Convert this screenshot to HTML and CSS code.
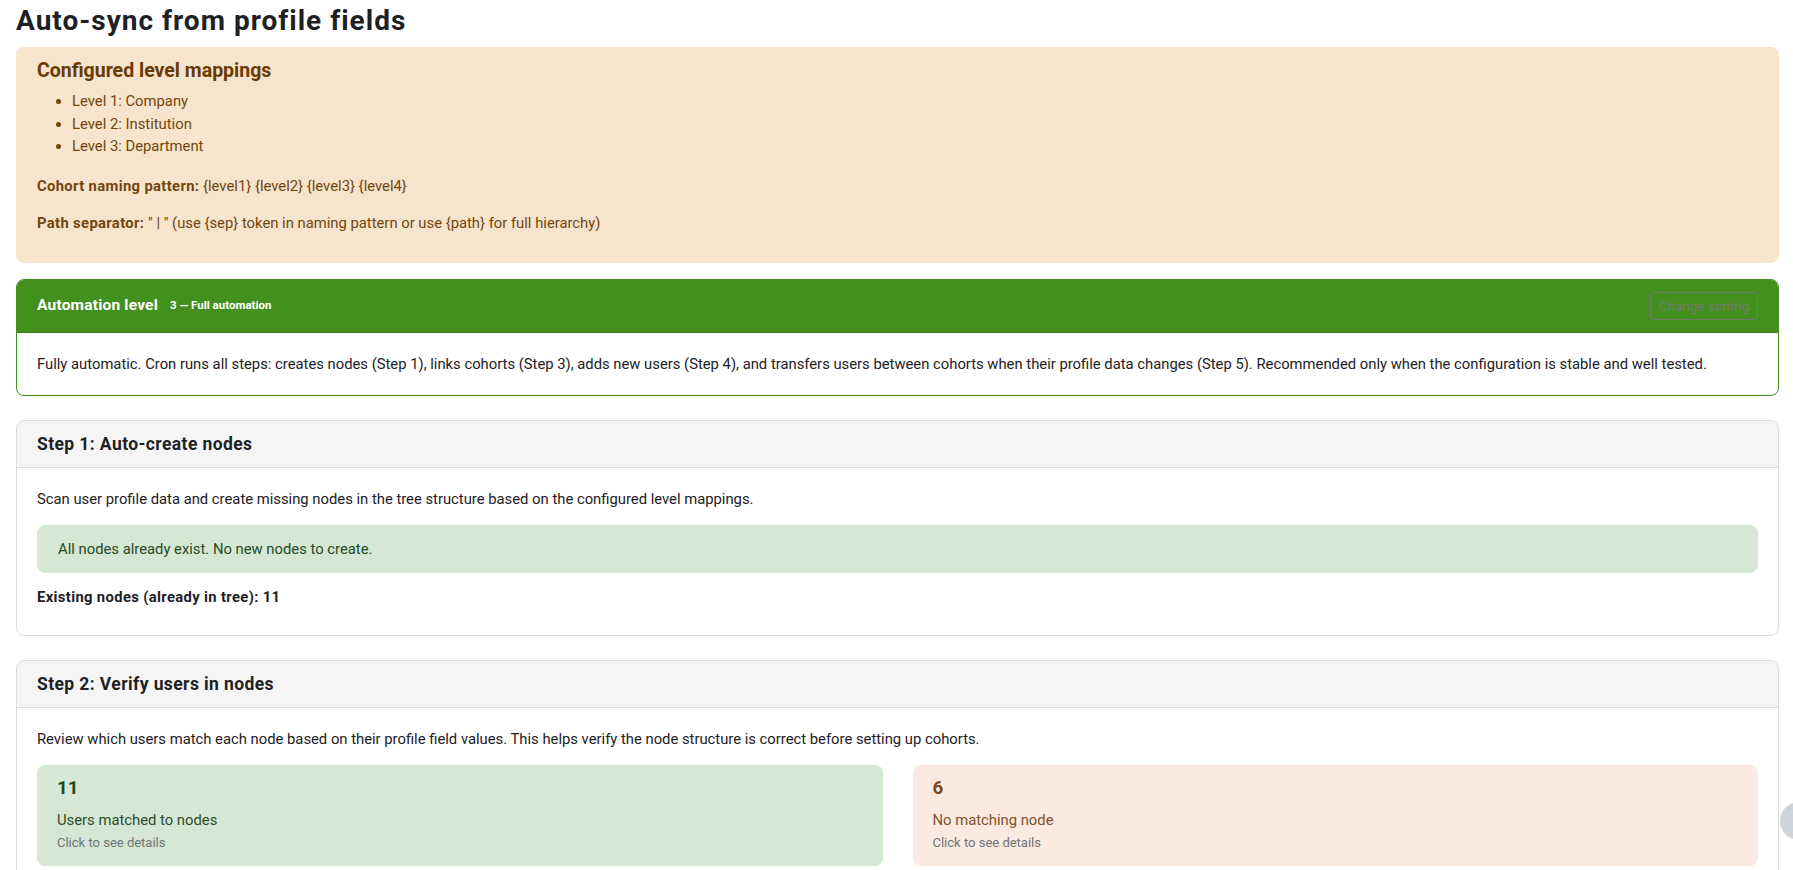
FILE: index.html
```html
<!DOCTYPE html>
<html lang="en">
<head>
  <meta charset="UTF-8">
  <title>Auto-sync from profile fields</title>
  <link rel="stylesheet" href="styles.css">
</head>
<body>

<div class="page">
  <h2 class="page-title">Auto-sync from profile fields</h2>

  <!-- configured mappings -->
  <div class="alert-warn">
    <h5>Configured level mappings</h5>
    <ul>
      <li>Level 1: Company</li>
      <li>Level 2: Institution</li>
      <li>Level 3: Department</li>
    </ul>
    <p><strong>Cohort naming pattern:</strong> {level1} {level2} {level3} {level4}</p>
    <p><strong>Path separator:</strong> " | " (use {sep} token in naming pattern or use {path} for full hierarchy)</p>
  </div>

  <!-- automation level -->
  <div class="card card-auto">
    <div class="card-header head-green">
      <span class="auto-title">Automation level</span>
      <span class="auto-badge">3 — Full automation</span>
      <button class="btn-change" disabled>Change setting</button>
    </div>
    <div class="card-body">
      <p class="last">Fully automatic. Cron runs all steps: creates nodes (Step 1), links cohorts (Step 3), adds new users (Step 4), and transfers users between cohorts when their profile data changes (Step 5). Recommended only when the configuration is stable and well tested.</p>
    </div>
  </div>

  <!-- step 1 -->
  <div class="card">
    <div class="card-header">
      <h5 class="step-title">Step 1: Auto-create nodes</h5>
    </div>
    <div class="card-body">
      <p>Scan user profile data and create missing nodes in the tree structure based on the configured level mappings.</p>
      <div class="alert-ok">All nodes already exist. No new nodes to create.</div>
      <p class="last"><strong>Existing nodes (already in tree): 11</strong></p>
    </div>
  </div>

  <!-- step 2 -->
  <div class="card">
    <div class="card-header">
      <h5 class="step-title">Step 2: Verify users in nodes</h5>
    </div>
    <div class="card-body">
      <p>Review which users match each node based on their profile field values. This helps verify the node structure is correct before setting up cohorts.</p>
      <div class="stats">
        <div class="stat stat-ok">
          <div class="stat-num">11</div>
          <div class="stat-label">Users matched to nodes</div>
          <div class="stat-hint">Click to see details</div>
        </div>
        <div class="stat stat-warn">
          <div class="stat-num">6</div>
          <div class="stat-label">No matching node</div>
          <div class="stat-hint">Click to see details</div>
        </div>
      </div>
    </div>
  </div>
</div>

<div class="float-btn"></div>

</body>
</html>
```

FILE: styles.css
```css
body {
  margin: 0;
  font-family: Roboto, "Segoe UI", "Liberation Sans", sans-serif;
  font-size: 14.8px;
  line-height: 22.5px;
  color: #1d2125;
  background: #fff;
}
.page {
  padding: 0 14px 0 16px;
}
p {
  margin: 0 0 15px;
}
strong {
  letter-spacing: 0.35px;
}
h5 {
  margin: 0;
  font-size: 19.5px;
  line-height: 22.5px;
  font-weight: 700;
}
.page-title {
  margin: 4px 0 9px;
  font-size: 28px;
  line-height: 34px;
  letter-spacing: 1px;
  font-weight: 700;
  color: #1d2125;
}

.alert-warn {
  background: #f6e4cc;
  border: 1px solid #f6e4cc;
  border-radius: 8px;
  padding: 12px 20px 12px;
  margin-bottom: 16px;
  color: #74440c;
}
.alert-warn h5 {
  color: #6a3a03;
  margin-bottom: 7.5px;
}
.alert-warn ul {
  margin: 0 0 17px;
  padding-left: 35px;
}

.card {
  border: 1px solid #dcdcdc;
  border-radius: 8px;
  margin-bottom: 24px;
  overflow: hidden;
}
.card-header {
  background: #f5f5f5;
  border-bottom: 1px solid #dcdcdc;
  padding: 11.5px 20px;
}
.step-title {
  font-size: 17.5px;
  letter-spacing: 0.4px;
}
.card-body {
  padding: 20px 20px 27px;
}
.card-body .last {
  margin-bottom: 0;
}

.card-auto {
  border-color: #43901e;
}
.card-auto .card-body {
  padding-bottom: 20px;
}
.head-green {
  background: #43901e;
  border-bottom-color: #3d8319;
  display: flex;
  align-items: center;
  color: #fff;
  padding: 12px 20px;
}
.auto-title {
  font-weight: 700;
  font-size: 15.5px;
  letter-spacing: 0.2px;
}
.auto-badge {
  font-weight: 700;
  font-size: 11.5px;
  margin-left: 12px;
}
.btn-change {
  margin-left: auto;
  background: transparent;
  color: #727e6c;
  border: 1px solid #6f7d68;
  border-radius: 3px;
  padding: 3px 8px;
  font-family: inherit;
  font-size: 13.5px;
  line-height: 20px;
}

.alert-ok {
  background: #d5e8d4;
  color: #264a23;
  border: 1px solid #d5e8d4;
  border-radius: 8px;
  padding: 11.5px 20px;
  margin-bottom: 13px;
}

.stats {
  display: grid;
  grid-template-columns: 1fr 1fr;
  gap: 30px;
}
.stat {
  border-radius: 8px;
  padding: 12px 20px 13px;
}
.stat-num {
  font-size: 18.75px;
  font-weight: 700;
  line-height: 22.5px;
  margin-bottom: 9px;
}
.stat-label {
  margin-bottom: 1px;
}
.stat-hint {
  font-size: 13px;
  line-height: 21px;
  color: #6f747a;
}
.stat-ok {
  background: #d5e8d4;
  color: #2d4c2a;
}
.stat-ok .stat-num {
  color: #1c4a19;
}
.stat-warn {
  background: #fbeadf;
  color: #7f5130;
}
.stat-warn .stat-num {
  color: #7a4a22;
}

.float-btn {
  position: fixed;
  right: -25px;
  bottom: 30px;
  width: 38px;
  height: 38px;
  border-radius: 50%;
  background: #ced4da;
}
```
